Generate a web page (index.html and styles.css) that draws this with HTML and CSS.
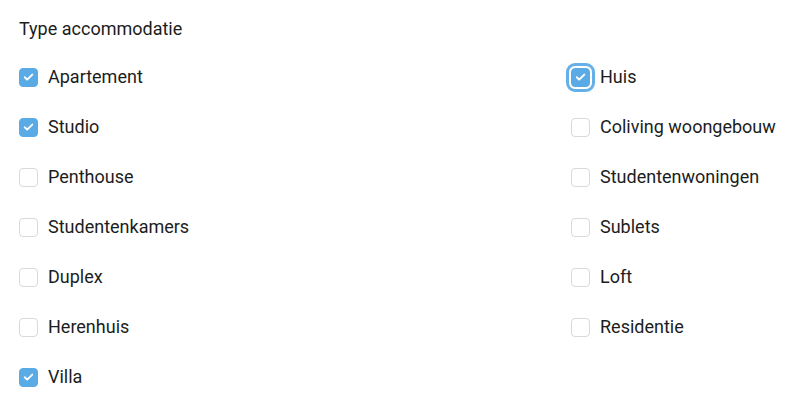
FILE: index.html
```html
<!DOCTYPE html>
<html lang="nl">
<head>
    <meta charset="UTF-8">
    <meta name="viewport" content="width=device-width, initial-scale=1.0">
    <title>Type accommodatie</title>
    <link rel="stylesheet" href="styles.css">
</head>
<body>
    <div class="filter">
        <h3 class="filter-title">Type accommodatie</h3>

        <div class="options">
            <label class="option">
                <span class="box checked"><svg viewBox="0 0 18 18"><path d="M5 9.3l2.6 2.5L13 6.4"/></svg></span>
                <span class="text">Apartement</span>
            </label>
            <label class="option">
                <span class="box checked focused"><svg viewBox="0 0 18 18"><path d="M5 9.3l2.6 2.5L13 6.4"/></svg></span>
                <span class="text">Huis</span>
            </label>

            <label class="option">
                <span class="box checked"><svg viewBox="0 0 18 18"><path d="M5 9.3l2.6 2.5L13 6.4"/></svg></span>
                <span class="text">Studio</span>
            </label>
            <label class="option">
                <span class="box"></span>
                <span class="text">Coliving woongebouw</span>
            </label>

            <label class="option">
                <span class="box"></span>
                <span class="text">Penthouse</span>
            </label>
            <label class="option">
                <span class="box"></span>
                <span class="text">Studentenwoningen</span>
            </label>

            <label class="option">
                <span class="box"></span>
                <span class="text">Studentenkamers</span>
            </label>
            <label class="option">
                <span class="box"></span>
                <span class="text">Sublets</span>
            </label>

            <label class="option">
                <span class="box"></span>
                <span class="text">Duplex</span>
            </label>
            <label class="option">
                <span class="box"></span>
                <span class="text">Loft</span>
            </label>

            <label class="option">
                <span class="box"></span>
                <span class="text">Herenhuis</span>
            </label>
            <label class="option">
                <span class="box"></span>
                <span class="text">Residentie</span>
            </label>

            <label class="option">
                <span class="box checked"><svg viewBox="0 0 18 18"><path d="M5 9.3l2.6 2.5L13 6.4"/></svg></span>
                <span class="text">Villa</span>
            </label>
        </div>
    </div>
</body>
</html>
```

FILE: styles.css
```css
body {
    font-family: 'Roboto', 'Liberation Sans', sans-serif;
    margin: 0;
    padding: 17px 19px;
    background-color: #fff;
    color: #1b1d21;
}
.filter-title {
    font-size: 18px;
    font-weight: 400;
    line-height: 24px;
    margin: 0 0 11px 0;
}
.options {
    display: grid;
    grid-template-columns: 552px 1fr;
    grid-auto-rows: 50px;
}
.option {
    display: flex;
    align-items: center;
    gap: 10px;
    font-size: 18px;
    line-height: 24px;
    cursor: pointer;
}
.box {
    width: 19px;
    height: 19px;
    box-sizing: border-box;
    border: 1px solid #d6d9de;
    border-radius: 4px;
    background: #fff;
    display: flex;
    align-items: center;
    justify-content: center;
    flex-shrink: 0;
}
.box.checked {
    background: #5aaae6;
    border-color: #5aaae6;
}
.box.focused {
    outline: 3px solid #66b0e8;
    outline-offset: 2px;
}
.box svg {
    width: 18px;
    height: 18px;
}
.box svg path {
    fill: none;
    stroke: #fff;
    stroke-width: 2;
    stroke-linecap: round;
    stroke-linejoin: round;
}
```
